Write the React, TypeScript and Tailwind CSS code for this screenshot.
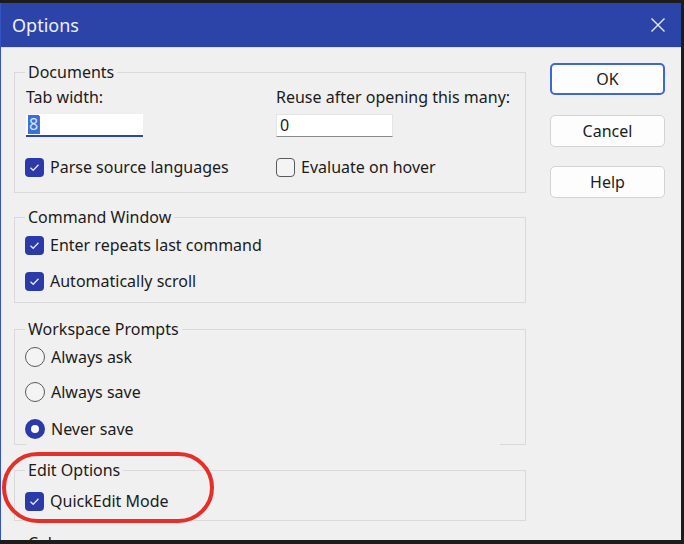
import React from "react";

const font = { fontFamily: '"Noto Sans", "Open Sans", Arial, sans-serif' };

function Check({ checked }: { checked: boolean }) {
  return checked ? (
    <span className="w-[19px] h-[19px] rounded-[4px] bg-[#2b3aa8] flex items-center justify-center shrink-0">
      <svg width="11" height="9" viewBox="0 0 11 9">
        <path d="M1.5 4.8 L4.2 7.3 L9.5 1.8" fill="none" stroke="#e6e9f8" strokeWidth="1.3" />
      </svg>
    </span>
  ) : (
    <span className="w-[19px] h-[19px] rounded-[4px] border-[1.5px] border-[#5a5a5a] bg-[#f4f4f4] shrink-0" />
  );
}

function Radio({ checked }: { checked: boolean }) {
  return checked ? (
    <span className="w-[20px] h-[20px] rounded-full bg-[#2b3aa8] flex items-center justify-center shrink-0">
      <span className="w-[8px] h-[8px] rounded-full bg-white" />
    </span>
  ) : (
    <span className="w-[20px] h-[20px] rounded-full border-[1.5px] border-[#5a5a5a] bg-[#f4f4f4] shrink-0" />
  );
}

function Row({ children, label, className = "" }: { children: React.ReactNode; label: string; className?: string }) {
  return (
    <div className={"h-[24px] flex items-center gap-[6px] " + className}>
      {children}
      <span className="text-[16px] leading-[24px] text-[#1b1b1b] whitespace-nowrap">{label}</span>
    </div>
  );
}

function Legend({ text }: { text: string }) {
  return (
    <legend className="px-[3px] text-[16px] leading-[20px] text-[#1b1b1b] whitespace-nowrap">{text}</legend>
  );
}

export default function App() {
  return (
    <div className="w-[684px] h-[544px] bg-[#1c1c1c] overflow-hidden relative" style={font}>
      <div className="mt-[3px] w-[681px] h-[537px] flex flex-col border-l border-[#3552c4] overflow-hidden">
        {/* Title bar */}
        <div className="h-[44px] bg-[#2c44a8] flex items-center justify-between pl-[11px] pr-[15px] shrink-0">
          <span className="text-[18px] text-[#eef0fa] leading-none">Options</span>
          <svg width="16" height="16" viewBox="0 0 16 16">
            <path d="M1.5 1.5 L14.5 14.5 M14.5 1.5 L1.5 14.5" stroke="#e8ebf7" strokeWidth="1.4" fill="none" />
          </svg>
        </div>
        <div className="h-[1px] bg-[#d7dbea] shrink-0" />
        {/* Content */}
        <div className="flex-1 bg-[#f0f0f0] flex pl-[13px] relative">
          <div className="w-[512px] flex flex-col">
            {/* Documents */}
            <fieldset className="mt-[14px] border border-[#d9d9d9] pl-[10px] pb-[13px]">
              <Legend text="Documents" />
              <div className="flex ml-[1px]">
                <div className="w-[250px] flex flex-col">
                  <div className="mt-[5px] h-[20px] text-[16px] leading-[20px] text-[#1b1b1b]">Tab width:</div>
                  <div className="mt-[7px] w-[117px] h-[23px] bg-white border-b-2 border-[#2d45b0] flex items-center pl-[2px]">
                    <span className="bg-[#3a6fd8] text-[#d8e4ff] text-[16px] leading-[19px] px-[1px]">8</span>
                    <span className="w-[1px] h-[18px] bg-[#c05a20]" />
                  </div>
                  <Row label="Parse source languages" className="mt-[18px] -ml-[1px]">
                    <Check checked />
                  </Row>
                </div>
                <div className="flex flex-col">
                  <div className="mt-[5px] h-[20px] text-[16px] leading-[20px] text-[#1b1b1b] whitespace-nowrap">Reuse after opening this many:</div>
                  <div className="mt-[7px] w-[117px] h-[23px] bg-white border border-[#e4e4e4] border-b-[#8a8a8a] flex items-center pl-[3px]">
                    <span className="text-[16px] leading-[19px] text-[#1b1b1b]">0</span>
                  </div>
                  <Row label="Evaluate on hover" className="mt-[18px]">
                    <Check checked={false} />
                  </Row>
                </div>
              </div>
            </fieldset>

            {/* Command Window */}
            <fieldset className="mt-[14px] border border-[#d9d9d9] pl-[10px] pb-[9px]">
              <Legend text="Command Window" />
              <Row label="Enter repeats last command" className="mt-[6px]">
                <Check checked />
              </Row>
              <Row label="Automatically scroll" className="mt-[12px]">
                <Check checked />
              </Row>
            </fieldset>

            {/* Workspace Prompts */}
            <fieldset className="mt-[16px] border border-[#d9d9d9] border-b-0 pl-[10px] pb-[3px]">
              <Legend text="Workspace Prompts" />
              <Row label="Always ask" className="mt-[6px]">
                <Radio checked={false} />
              </Row>
              <Row label="Always save" className="mt-[11px]">
                <Radio checked={false} />
              </Row>
              <Row label="Never save" className="mt-[13px]">
                <Radio checked />
              </Row>
            </fieldset>
            <div className="h-[1px] flex justify-between">
              <div className="w-[12px] bg-[#d9d9d9]" />
              <div className="w-[26px] bg-[#d9d9d9]" />
            </div>

            {/* Edit Options */}
            <fieldset className="mt-[15px] border border-[#d9d9d9] pl-[10px] pb-[7px]">
              <Legend text="Edit Options" />
              <Row label="QuickEdit Mode" className="mt-[9px]">
                <Check checked />
              </Row>
            </fieldset>

            {/* Colors (cut off) */}
            <fieldset className="mt-[12px] border border-[#d9d9d9] h-[60px] pl-[10px]">
              <Legend text="Colors" />
            </fieldset>
          </div>

          {/* Buttons */}
          <div className="ml-[24px] pt-[15px] flex flex-col w-[115px]">
            <button className="h-[32px] rounded-[5px] bg-[#fdfdfd] border-2 border-[#3d66d6] text-[16px] text-[#1b1b1b]">OK</button>
            <button className="mt-[20px] h-[32px] rounded-[5px] bg-[#fdfdfd] border border-[#d3d3d3] text-[16px] text-[#1b1b1b]">Cancel</button>
            <button className="mt-[19px] h-[32px] rounded-[5px] bg-[#fdfdfd] border border-[#d3d3d3] text-[16px] text-[#1b1b1b]">Help</button>
          </div>

          {/* Red highlight ellipse */}
          <div className="absolute left-[1px] top-[404px] w-[212px] h-[71px] rounded-[36px] border-[4px] border-[#e5302a] pointer-events-none" />
        </div>
      </div>
    </div>
  );
}
